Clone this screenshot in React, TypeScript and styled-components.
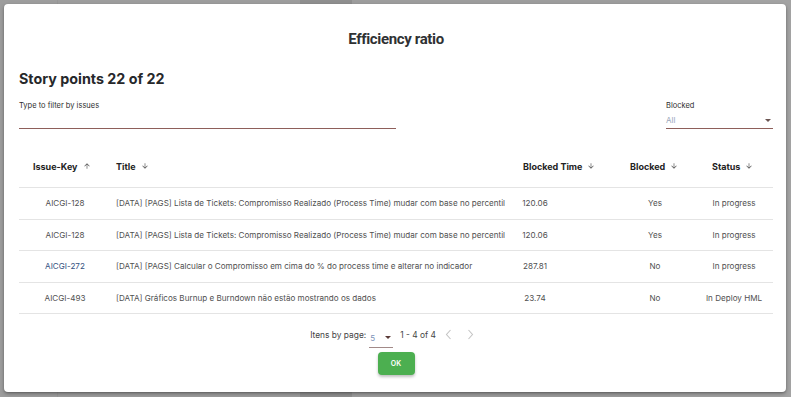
import React from "react";
import styled, { createGlobalStyle } from "styled-components";

const Global = createGlobalStyle`
  html, body { margin: 0; padding: 0; }
  body { font-family: "Inter", "Noto Sans", sans-serif; background: #9b9b9b; }
  * { box-sizing: border-box; }
`;

const Backdrop = styled.div`
  width: 791px;
  height: 397px;
  padding: 4px 5px 5px 4px;
  background: linear-gradient(90deg, #9d9d9d 0 57px, #979797 57px 58px, #9d9d9d 58px 300px, #8f8f8f 300px 352px, #9d9d9d 352px 670px, #a3a3a3 670px);
  overflow: hidden;
`;

const Dialog = styled.div`
  width: 782px;
  height: 388px;
  background: #fff;
  border-radius: 4px;
  box-shadow: 0 2px 4px rgba(0,0,0,0.25), 0 1px 2px rgba(0,0,0,0.2);
  padding: 24px 13px 0 15px;
  display: flex;
  flex-direction: column;
`;

const Title = styled.h1`
  margin: 0;
  font-family: "Roboto", sans-serif;
  font-weight: 700;
  font-size: 15px;
  letter-spacing: -0.35px;
  line-height: 22px;
  text-align: center;
  color: #2f3133;
`;

const Subtitle = styled.h2`
  margin: 20px 0 0 0;
  font-weight: 700;
  font-size: 14.3px;
  line-height: 18px;
  color: #26282b;
`;

const Filters = styled.div`
  margin-top: 12px;
  display: flex;
  justify-content: space-between;
`;

const Field = styled.div<{ $w: number }>`
  width: ${(p) => p.$w}px;
  display: flex;
  flex-direction: column;
`;

const Label = styled.label`
  font-size: 7.5px;
  line-height: 12px;
  color: #2e2e2e;
`;

const InputLine = styled.div`
  height: 17px;
  border-bottom: 1px solid #8e5f5a;
  display: flex;
  align-items: center;
  justify-content: space-between;
  padding-right: 2px;
`;

const Placeholder = styled.span`
  font-size: 8px;
  color: #9aa6bb;
`;

const Caret = styled.span<{ $c: string }>`
  width: 0;
  height: 0;
  border-left: 3.5px solid transparent;
  border-right: 3.5px solid transparent;
  border-top: 3.5px solid ${(p) => p.$c};
`;

const Table = styled.div`
  margin-top: 16px;
  display: flex;
  flex-direction: column;
`;

const cols = "92px 400px 48px 136px 78px";

const HeadRow = styled.div`
  display: grid;
  grid-template-columns: ${cols};
  height: 43px;
  align-items: center;
  border-bottom: 1px solid #e4e4e4;
`;

const Row = styled.div`
  display: grid;
  grid-template-columns: ${cols};
  height: 31.6px;
  align-items: center;
  border-bottom: 1px solid #e4e4e4;
`;

const HeadCell = styled.div<{ $pl: number }>`
  padding-left: ${(p) => p.$pl}px;
  font-weight: 700;
  font-size: 9px;
  color: #232323;
  display: flex;
  align-items: center;
  gap: 5px;
  white-space: nowrap;
  min-width: 0;
  overflow: visible;
  svg { flex-shrink: 0; }
`;

const Cell = styled.div<{ $align?: string; $pl?: number; $link?: boolean }>`
  padding-left: ${(p) => p.$pl ?? 0}px;
  text-align: ${(p) => p.$align ?? "center"};
  font-size: 8.1px;
  color: ${(p) => (p.$link ? "#34527f" : "#505050")};
  white-space: nowrap;
`;

const Pager = styled.div`
  margin-top: 11px;
  padding-right: 8px;
  display: flex;
  justify-content: center;
  align-items: center;
  height: 22px;
  font-size: 8.4px;
  color: #444;
`;

const PagerText = styled.span<{ $ml?: number }>`
  margin-left: ${(p) => p.$ml ?? 0}px;
  margin-top: -3px;
`;

const PageSelect = styled.div`
  margin-left: 3px;
  width: 24px;
  height: 20px;
  border-bottom: 1px solid #a28a88;
  display: flex;
  align-items: center;
  justify-content: space-between;
  padding: 0 2px 0 1px;
  margin-top: 4px;
`;

const PageValue = styled.span`
  color: #7b92b8;
  font-size: 8px;
`;

const NavBtn = styled.span<{ $ml: number }>`
  margin-left: ${(p) => p.$ml}px;
  margin-top: -3px;
  display: flex;
  align-items: center;
`;

const Actions = styled.div`
  margin-top: 5px;
  display: flex;
  justify-content: center;
`;

const OkButton = styled.button`
  width: 37px;
  height: 23px;
  border: none;
  border-radius: 4px;
  background: #4caf50;
  color: #fff;
  font-family: "Inter", sans-serif;
  font-size: 7px;
  font-weight: 600;
  box-shadow: 0 2px 3px rgba(0,0,0,0.25);
`;

const Arrow = ({ up }: { up?: boolean }) => (
  <svg width="8" height="8" viewBox="0 0 24 24" style={{ transform: up ? "none" : "rotate(180deg)" }}>
    <path d="M4 12l1.41 1.41L11 7.83V20h2V7.83l5.58 5.59L20 12l-8-8-8 8z" fill="#555" />
  </svg>
);

const Chevron = ({ right }: { right?: boolean }) => (
  <svg width="7" height="11" viewBox="0 0 7 11">
    <path d={right ? "M1.5 1 L5.5 5.5 L1.5 10" : "M5.5 1 L1.5 5.5 L5.5 10"} fill="none" stroke="#c4c4c4" strokeWidth="1.1" />
  </svg>
);

const rows = [
  { key: "AICGI-128", title: "[DATA] [PAGS] Lista de Tickets: Compromisso Realizado (Process Time) mudar com base no percentil", time: "120.06", blocked: "Yes", status: "In progress" },
  { key: "AICGI-128", title: "[DATA] [PAGS] Lista de Tickets: Compromisso Realizado (Process Time) mudar com base no percentil", time: "120.06", blocked: "Yes", status: "In progress" },
  { key: "AICGI-272", title: "[DATA] [PAGS] Calcular o Compromisso em cima do % do process time e alterar no indicador", time: "287.81", blocked: "No", status: "In progress", link: true },
  { key: "AICGI-493", title: "[DATA] Gráficos Burnup e Burndown não estão mostrando os dados", time: "23.74", blocked: "No", status: "In Deploy HML" },
];

export default function App() {
  return (
    <>
      <Global />
      <Backdrop>
        <Dialog>
          <Title>Efficiency ratio</Title>
          <Subtitle>Story points 22 of 22</Subtitle>
          <Filters>
            <Field $w={377}>
              <Label>Type to filter by issues</Label>
              <InputLine />
            </Field>
            <Field $w={107}>
              <Label>Blocked</Label>
              <InputLine>
                <Placeholder>All</Placeholder>
                <Caret $c="#6b5552" />
              </InputLine>
            </Field>
          </Filters>
          <Table>
            <HeadRow>
              <HeadCell $pl={14}>Issue-Key <Arrow up /></HeadCell>
              <HeadCell $pl={5}>Title <Arrow /></HeadCell>
              <HeadCell $pl={12}>Blocked Time <Arrow /></HeadCell>
              <HeadCell $pl={71}>Blocked <Arrow /></HeadCell>
              <HeadCell $pl={17}>Status <Arrow /></HeadCell>
            </HeadRow>
            {rows.map((r, i) => (
              <Row key={i}>
                <Cell $link={r.link}>{r.key}</Cell>
                <Cell $align="left" $pl={5}>{r.title}</Cell>
                <Cell>{r.time}</Cell>
                <Cell $pl={56}>{r.blocked}</Cell>
                <Cell>{r.status}</Cell>
              </Row>
            ))}
          </Table>
          <Pager>
            <PagerText>Itens by page:</PagerText>
            <PageSelect>
              <PageValue>5</PageValue>
              <Caret $c="#5a3b38" />
            </PageSelect>
            <PagerText $ml={7}>1 - 4 of 4</PagerText>
            <NavBtn $ml={9}><Chevron /></NavBtn>
            <NavBtn $ml={15}><Chevron right /></NavBtn>
          </Pager>
          <Actions>
            <OkButton>OK</OkButton>
          </Actions>
        </Dialog>
      </Backdrop>
    </>
  );
}
